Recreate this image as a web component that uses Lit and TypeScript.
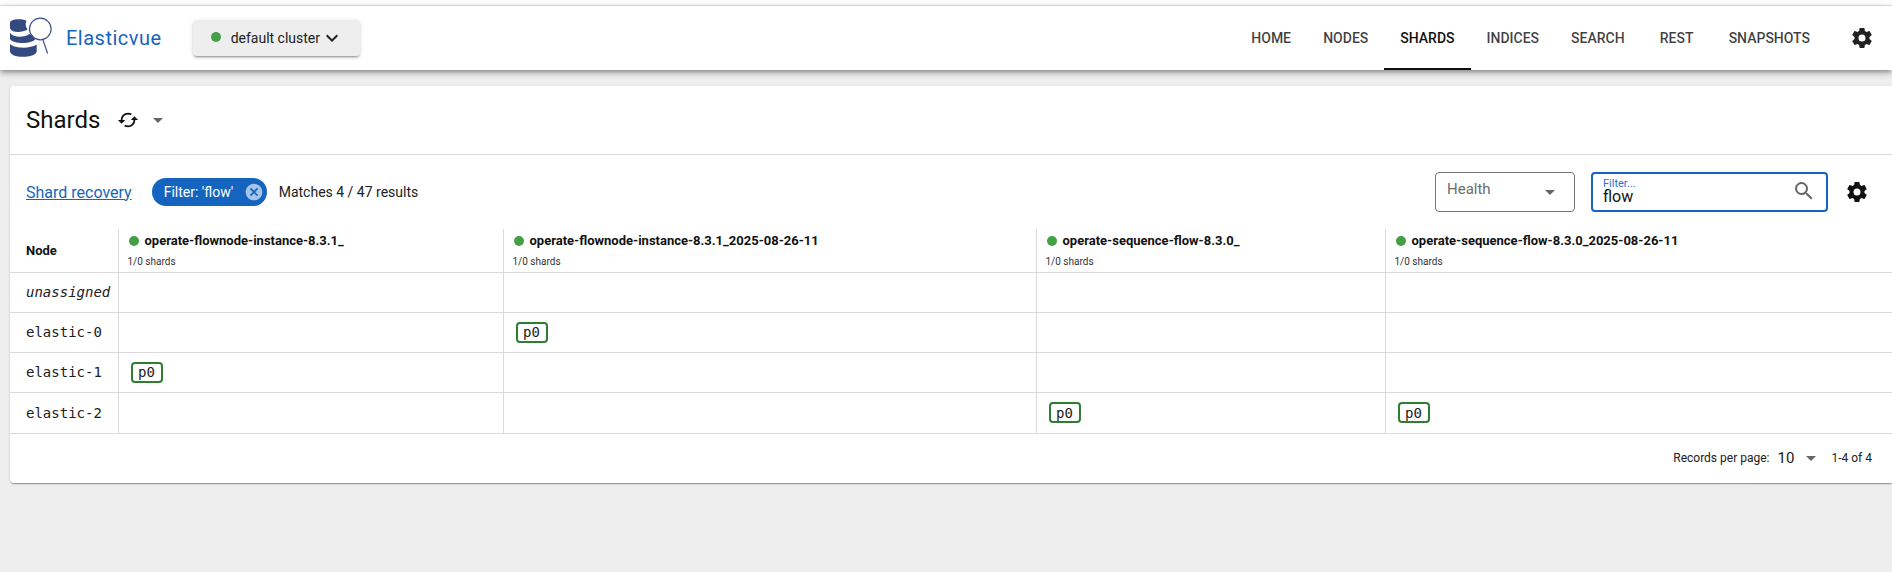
import { LitElement, html, css, svg } from "lit";
import { customElement } from "lit/decorators.js";

const P = {
  cog: "M12,15.5A3.5,3.5 0 0,1 8.5,12A3.5,3.5 0 0,1 12,8.5A3.5,3.5 0 0,1 15.5,12A3.5,3.5 0 0,1 12,15.5M19.43,12.97C19.47,12.65 19.5,12.33 19.5,12C19.5,11.67 19.47,11.34 19.43,11L21.54,9.37C21.73,9.22 21.78,8.95 21.66,8.73L19.66,5.27C19.54,5.05 19.27,4.96 19.05,5.05L16.56,6.05C16.04,5.66 15.5,5.32 14.87,5.07L14.5,2.42C14.46,2.18 14.25,2 14,2H10C9.75,2 9.54,2.18 9.5,2.42L9.13,5.07C8.5,5.32 7.96,5.66 7.44,6.05L4.95,5.05C4.73,4.96 4.46,5.05 4.34,5.27L2.34,8.73C2.21,8.95 2.27,9.22 2.46,9.37L4.57,11C4.53,11.34 4.5,11.67 4.5,12C4.5,12.33 4.53,12.65 4.57,12.97L2.46,14.63C2.27,14.78 2.21,15.05 2.34,15.27L4.34,18.73C4.46,18.95 4.73,19.03 4.95,18.95L7.44,17.94C7.96,18.34 8.5,18.68 9.13,18.93L9.5,21.58C9.54,21.82 9.75,22 10,22H14C14.25,22 14.46,21.82 14.5,21.58L14.87,18.93C15.5,18.67 16.04,18.34 16.56,17.94L19.05,18.95C19.27,19.03 19.54,18.95 19.66,18.73L21.66,15.27C21.78,15.05 21.73,14.78 21.54,14.63L19.43,12.97Z",
  magnify: "M9.5,3A6.5,6.5 0 0,1 16,9.5C16,11.11 15.41,12.59 14.44,13.73L14.71,14H15.5L20.5,19L19,20.5L14,15.5V14.71L13.73,14.44C12.59,15.41 11.11,16 9.5,16A6.5,6.5 0 0,1 3,9.5A6.5,6.5 0 0,1 9.5,3M9.5,5C7,5 5,7 5,9.5C5,12 7,14 9.5,14C12,14 14,12 14,9.5C14,7 12,5 9.5,5Z",
  close: "M12,2C17.53,2 22,6.47 22,12C22,17.53 17.53,22 12,22C6.47,22 2,17.53 2,12C2,6.47 6.47,2 12,2M15.59,7L12,10.59L8.41,7L7,8.41L10.59,12L7,15.59L8.41,17L12,13.41L15.59,17L17,15.59L13.41,12L17,8.41L15.59,7Z",
  chevron: "M7.41,8.58L12,13.17L16.59,8.58L18,10L12,16L6,10L7.41,8.58Z",
  down: "M7,10L12,15L17,10H7Z",
  cached: "M19,8L15,12H18A6,6 0 0,1 12,18C11,18 10.03,17.75 9.2,17.3L7.74,18.76C8.97,19.54 10.43,20 12,20A8,8 0 0,0 20,12H23M6,12A6,6 0 0,1 12,6C13,6 13.97,6.25 14.8,6.7L16.26,5.24C15.03,4.46 13.57,4 12,4A8,8 0 0,0 4,12H1L5,16L9,12",
};

const icon = (d: string, cls = "") =>
  html`<svg class="icon ${cls}" viewBox="0 0 24 24" fill="currentColor">${svg`<path d=${d}></path>`}</svg>`;

const logo = html`<svg class="logo" viewBox="0 0 42 44">
  <path fill="#34497f" d="M0,8 C0,5.5 4,4.3 8.5,4.3 C11,4.3 14,4.7 16.5,5.8 C15,8.5 15.5,12 17.7,14.5 C12,18 2,18 0,13.5 Z"></path>
  <path fill="#34497f" d="M0,18 C3,22.5 14,23 19.5,19 C20.5,19.6 21.5,20 23,20.5 L25,24.5 C22,29 3,29.5 0,24 Z"></path>
  <path fill="#34497f" d="M0,29 C4,33.5 20,34 26.7,29.5 L26.7,36.5 C26,40 20,41.8 13,41.8 C6,41.8 0,40 0,36 Z"></path>
  <circle cx="30.3" cy="14" r="10.8" fill="none" stroke="#3f5189" stroke-width="1.2"></circle>
  <path d="M33,25 L37.6,38.5" fill="none" stroke="#3f5189" stroke-width="1.2"></path>
</svg>`;

const TABS = ["Home", "Nodes", "Shards", "Indices", "Search", "Rest", "Snapshots"];
const INDICES = [
  "operate-flownode-instance-8.3.1_",
  "operate-flownode-instance-8.3.1_2025-08-26-11",
  "operate-sequence-flow-8.3.0_",
  "operate-sequence-flow-8.3.0_2025-08-26-11",
];
const ROWS: [string, number[], boolean][] = [
  ["unassigned", [], true],
  ["elastic-0", [1], false],
  ["elastic-1", [0], false],
  ["elastic-2", [2, 3], false],
];

@customElement("app-root")
export class AppRoot extends LitElement {
  static styles = css`
    :host {
      display: block;
      min-height: 572px;
      background: #eeeeee;
      font-family: Roboto, sans-serif;
      color: #212121;
      font-size: 14px;
      overflow: hidden;
    }
    * { box-sizing: border-box; }
    .icon { display: block; flex: none; width: 24px; height: 24px; }
    .topline { height: 6px; background: #fff; border-bottom: 1px solid #e0e0e0; }
    header {
      height: 64px;
      background: #fff;
      display: flex;
      align-items: center;
      padding: 0 18px 0 10px;
      box-shadow: 0 2px 4px -1px rgba(0,0,0,.3), 0 4px 5px rgba(0,0,0,.14), 0 1px 10px rgba(0,0,0,.12);
      position: relative;
    }
    .logo { display: block; width: 42px; height: 44px; margin-top: -2px; }
    .brand { color: #1565c0; font-size: 20px; letter-spacing: .5px; margin-left: 14px; margin-top: -1px; }
    .cluster {
      margin-left: 31px;
      width: 167px;
      height: 36px;
      background: #eeeeee;
      border-radius: 4px;
      box-shadow: 0 3px 1px -2px rgba(0,0,0,.2), 0 2px 2px rgba(0,0,0,.14), 0 1px 5px rgba(0,0,0,.12);
      display: flex;
      align-items: center;
      padding-left: 18px;
    }
    .dot { width: 10px; height: 10px; border-radius: 50%; background: #43a047; flex: none; }
    .cluster .dot { margin-top: -2px; }
    .cluster .name { margin-left: 10px; }
    .cluster .icon { margin-left: 0; }
    nav { margin-left: auto; display: flex; height: 100%; align-items: stretch; }
    .tab {
      min-width: 72px;
      padding: 0 16px;
      display: flex;
      align-items: center;
      justify-content: center;
      text-transform: uppercase;
      font-weight: 500;
      color: rgba(0,0,0,.75);
      position: relative;
    }
    .tab.active { color: #111; }
    .tab.active::after {
      content: "";
      position: absolute;
      left: 0; right: 0; bottom: 0;
      height: 2px;
      background: #111;
    }
    .gearbox { display: flex; align-items: center; }
    .gear { margin-left: 24px; color: #212121; }
    main { padding: 16px 0 0 10px; }
    .card {
      background: #fff;
      border-radius: 4px 0 0 4px;
      height: 397px;
      box-shadow: 0 2px 1px -1px rgba(0,0,0,.2), 0 1px 1px rgba(0,0,0,.14), 0 1px 3px rgba(0,0,0,.12);
    }
    .title {
      height: 69px;
      border-bottom: 1px solid #d9d9d9;
      display: flex;
      align-items: center;
      padding-left: 16px;
    }
    .title h1 { margin: 0; font-size: 24px; font-weight: 400; color: #111; width: 91px; }
    .title .sync { width: 22px; height: 22px; color: #111; }
    .title .caret { width: 24px; height: 24px; color: #666; margin-left: 7px; }
    .filters {
      height: 74px;
      display: flex;
      align-items: center;
      padding: 0 29px 0 16px;
      position: relative;
    }
    .recovery { font-size: 16px; color: #1565c0; text-decoration: underline; }
    .chip {
      margin-left: 20px;
      height: 28px;
      width: 115px;
      background: #1565c0;
      color: #fff;
      border-radius: 14px;
      display: flex;
      align-items: center;
      padding-left: 12px;
      position: relative;
    }
    .chip .icon { width: 20px; height: 20px; position: absolute; right: 3px; top: 4px; color: rgba(255,255,255,.62); }
    .matches { margin-left: 12px; color: #212121; }
    .right { margin-left: auto; display: flex; align-items: center; }
    .health {
      width: 140px;
      height: 40px;
      border: 1px solid #757575;
      border-radius: 4px;
      display: flex;
      align-items: center;
      justify-content: space-between;
      padding: 0 12px 0 11px;
      color: #6b6b6b;
      font-size: 15px;
    }
    .health span { margin-top: -6px; }
    .health .icon { color: #666; }
    .search {
      margin-left: 16px;
      width: 237px;
      height: 40px;
      border: 2px solid #1565c0;
      border-radius: 4px;
      display: flex;
      align-items: center;
      justify-content: space-between;
      padding: 0 10px 0 10px;
    }
    .search .label { font-size: 11px; line-height: 11px; color: #1e73d2; margin-top: -2px; }
    .search .value { font-size: 16px; line-height: 15px; color: #111; }
    .search .icon { color: #666; margin-top: -2px; }
    .gear2 { margin-left: 17px; color: #111; margin-right: -6px; }
    table { border-collapse: collapse; table-layout: fixed; width: 1882px; }
    th, td { border-bottom: 1px solid #d9d9d9; border-left: 1px solid #d9d9d9; padding: 0; text-align: left; }
    th:first-child, td:first-child { border-left: none; padding-left: 16px; }
    thead th { height: 43px; font-weight: 700; font-size: 13px; color: #111; }
    .ih { padding-left: 10px; font-weight: 700; }
    .ih .top { display: flex; align-items: center; gap: 6px; padding-left: 0; }
    .ih .sub { font-size: 10px; font-weight: 400; color: #333; margin-top: 8px; margin-left: -1px; }
    .nodehead { font-size: 13px; }
    tbody td { height: 40px; }
    tbody tr:last-child td { height: 41px; }
    .node { font-family: "DejaVu Sans Mono", monospace; font-size: 14px; color: #212121; }
    .node.it { font-style: italic; }
    .shard {
      display: inline-flex;
      align-items: center;
      justify-content: center;
      width: 32px;
      height: 21px;
      margin-left: 12px;
      border: 2px solid #2e7d32;
      border-radius: 4px;
      font-family: "DejaVu Sans Mono", monospace;
      font-size: 14px;
      color: #212121;
      vertical-align: middle;
    }
    .pager {
      height: 49px;
      display: flex;
      align-items: center;
      justify-content: flex-end;
      padding-right: 20px;
      font-size: 12px;
      color: #212121;
    }
    .pager .num { font-size: 15px; margin-left: 8px; width: 22px; }
    .pager .icon { color: #666; margin-right: 8px; margin-left: 0; }
  `;

  render() {
    return html`
      <div class="topline"></div>
      <header>
        ${logo}
        <div class="brand">Elasticvue</div>
        <div class="cluster">
          <span class="dot"></span>
          <span class="name">default cluster</span>
          ${icon(P.chevron)}
        </div>
        <nav>
          ${TABS.map(
            (t) => html`<div class="tab ${t === "Shards" ? "active" : ""}"><span>${t}</span></div>`
          )}
          <div class="gearbox">${icon(P.cog, "gear")}</div>
        </nav>
      </header>
      <main>
        <section class="card">
          <div class="title">
            <h1>Shards</h1>
            ${icon(P.cached, "sync")}
            ${icon(P.down, "caret")}
          </div>
          <div class="filters">
            <a class="recovery">Shard recovery</a>
            <div class="chip">Filter: 'flow' ${icon(P.close)}</div>
            <div class="matches">Matches 4 / 47 results</div>
            <div class="right">
              <div class="health"><span>Health</span>${icon(P.down)}</div>
              <div class="search">
                <div>
                  <div class="label">Filter...</div>
                  <div class="value">flow</div>
                </div>
                ${icon(P.magnify)}
              </div>
              ${icon(P.cog, "gear2")}
            </div>
          </div>
          <table>
            <colgroup>
              <col style="width:108px" />
              <col style="width:385px" />
              <col style="width:533px" />
              <col style="width:349px" />
              <col />
            </colgroup>
            <thead>
              <tr>
                <th class="nodehead">Node</th>
                ${INDICES.map(
                  (n) => html`<th class="ih">
                    <div class="top"><span class="dot"></span><span>${n}</span></div>
                    <div class="sub">1/0 shards</div>
                  </th>`
                )}
              </tr>
            </thead>
            <tbody>
              ${ROWS.map(
                ([name, cols, it]) => html`<tr>
                  <td class="node ${it ? "it" : ""}">${name}</td>
                  ${INDICES.map(
                    (_, i) => html`<td>${cols.includes(i) ? html`<span class="shard">p0</span>` : ""}</td>`
                  )}
                </tr>`
              )}
            </tbody>
          </table>
          <div class="pager">
            <span>Records per page:</span>
            <span class="num">10</span>
            ${icon(P.down)}
            <span>1-4 of 4</span>
          </div>
        </section>
      </main>
    `;
  }
}
